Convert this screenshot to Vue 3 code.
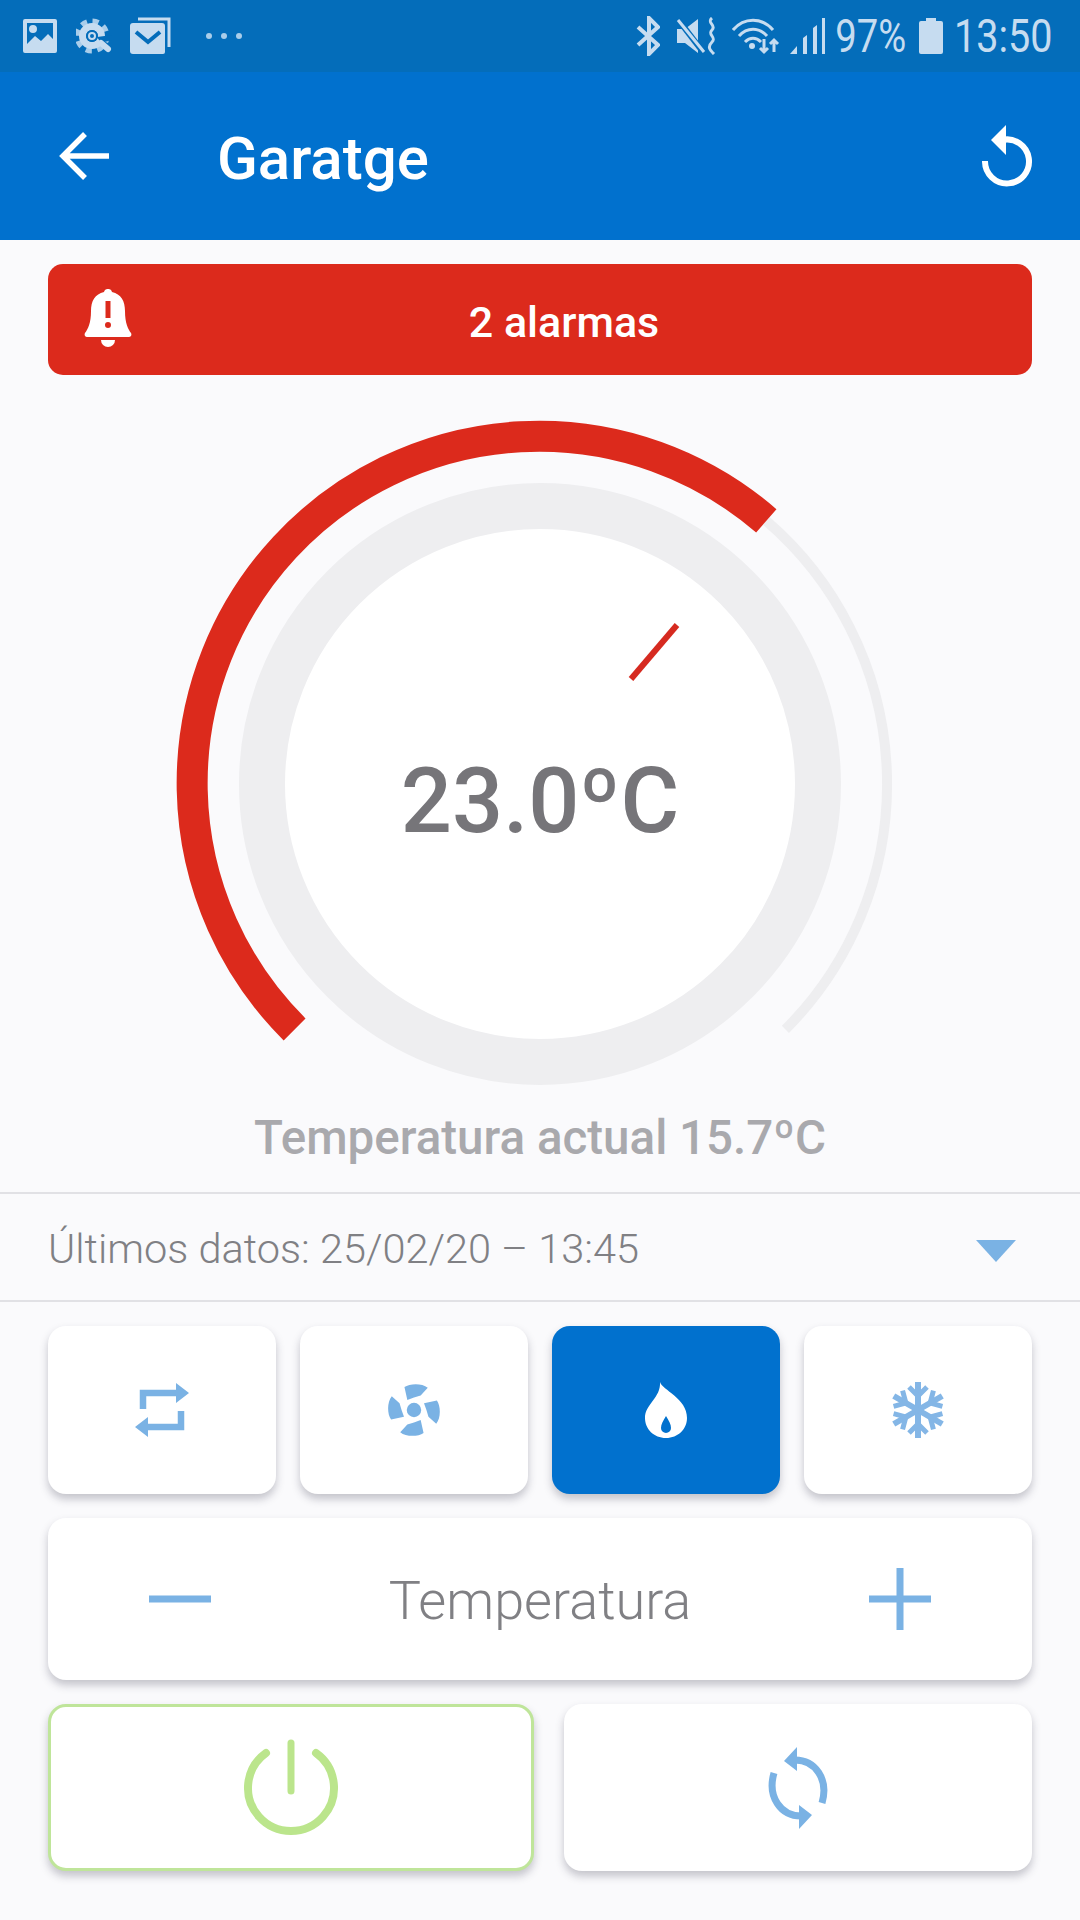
<template>
  <div class="screen">
    <div class="status-bar">
      <div class="status-left">
        <svg width="36" height="36" viewBox="0 0 36 36">
          <path fill="#c6dcf0" fill-rule="evenodd" d="M3 1h30a2 2 0 0 1 2 2v30a2 2 0 0 1-2 2H3a2 2 0 0 1-2-2V3a2 2 0 0 1 2-2zM5 5v21l8-8 6 5 7-7 5 5V5zM11 7a4 4 0 1 1 0 8 4 4 0 0 1 0-8z" />
        </svg>
        <svg width="36" height="36" viewBox="0 0 36 36">
          <circle cx="16" cy="18" r="14.500" fill="none" stroke="#a9cdea" stroke-width="6" stroke-dasharray="6 5.400" />
          <circle cx="16" cy="18" r="9.500" fill="none" stroke="#c6dcf0" stroke-width="7" />
          <circle cx="16" cy="18" r="6" fill="#046dba" />
          <circle cx="16" cy="18" r="3" fill="none" stroke="#c6dcf0" stroke-width="2" />
          <path d="M21 19l15-2v5l-11 3z" fill="#046dba" />
          <path stroke="#c6dcf0" stroke-width="6" stroke-linecap="round" d="M25 25l7 6" />
        </svg>
        <svg width="42" height="38" viewBox="0 0 42 38">
          <path fill="none" stroke="#c6dcf0" stroke-width="3" d="M8 2h31v28" />
          <path fill="#c6dcf0" d="M3 6h29a3 3 0 0 1 3 3v26a2 2 0 0 1-2 2H3a3 3 0 0 1-3-3V9a3 3 0 0 1 3-3z" />
          <path fill="none" stroke="#046dba" stroke-width="4" d="M6 15l12 10 12-10" />
        </svg>
        <div class="dots"><i></i><i></i><i></i></div>
      </div>
      <div class="status-right">
        <svg width="24" height="40" viewBox="0 0 24 40">
          <path fill="none" stroke="#c6dcf0" stroke-width="4" d="M2 11l20 18-9 9V2l9 9L2 29" />
        </svg>
        <svg class="st-vib" width="42" height="38" viewBox="0 0 42 38">
          <path fill="#c6dcf0" d="M1 12h8l13-10v34L9 26H1z" />
          <path stroke="#046dba" stroke-width="6" d="M1 1l26 34" />
          <path stroke="#c6dcf0" stroke-width="3" d="M2 3l26 32" />
          <path fill="none" stroke="#c6dcf0" stroke-width="3" d="M36 1c-6 5 5 7 0 12s5 7 0 12-2 8 2 12" />
        </svg>
        <svg class="st-wifi" width="50" height="38" viewBox="0 0 50 38">
          <g fill="none" stroke="#c6dcf0" stroke-width="3">
            <path d="M1 13c11-13 29-13 40 0" />
            <path d="M7 19c8-9 20-9 28 0" />
            <path d="M13 25c5-5 11-5 16 0" />
          </g>
          <circle cx="20" cy="29" r="3" fill="#c6dcf0" />
          <path fill="none" stroke="#c6dcf0" stroke-width="3" d="M32 22v13M28 31l4 4 4-4M42 35V23M38 27l4-4 4 4" />
        </svg>
        <svg width="36" height="38" viewBox="0 0 36 38">
          <path fill="#c6dcf0" d="M0 37l7-8v8zM13 37V21l4-3v19zM23 37V11l4-3v29zM32 37V1h3v36z" />
        </svg>
        <span class="st-text pct">97%</span>
        <svg width="24" height="36" viewBox="0 0 24 36">
          <path fill="#c6dcf0" d="M7 0h10v3h5a2 2 0 0 1 2 2v29a2 2 0 0 1-2 2H2a2 2 0 0 1-2-2V5a2 2 0 0 1 2-2h5z" />
        </svg>
        <span class="st-text clock">13:50</span>
      </div>
    </div>

    <header class="app-bar">
      <svg class="back" width="50" height="50" viewBox="0 0 50 50">
        <path fill="none" stroke="#fff" stroke-width="5.500" d="M50 25H4M26 3L4 25l22 22" />
      </svg>
      <h1 class="title">Garatge</h1>
      <svg class="reload" width="52" height="62" viewBox="0 0 52 62">
        <path fill="none" stroke="#fff" stroke-width="6" d="M20 15a22 22 0 1 1-17 21" />
        <path fill="#fff" d="M24 0v30L9 15z" />
      </svg>
    </header>

    <div class="alarm">
      <svg class="bell" width="48" height="62" viewBox="0 0 48 62">
        <path fill="#fff" fill-rule="evenodd" d="M24 0a4 4 0 0 1 4 3c9 2 13 9 13 19 0 12 3 18 6 22 1 2 0 4-2 4H3c-2 0-3-2-2-4 3-4 6-10 6-22C7 12 11 5 20 3a4 4 0 0 1 4-3zM21.500 12v17h5V12zM24 33a3 3 0 1 0 0 6 3 3 0 0 0 0-6z" />
        <path fill="#fff" d="M17 51h14a7 7 0 0 1-14 0z" />
      </svg>
      <span class="alarm-text">2 alarmas</span>
    </div>

    <div class="gauge">
      <svg class="gauge-svg" width="1080" height="690" viewBox="0 0 1080 690">
        <circle cx="540" cy="368" r="278" fill="#fff" stroke="#eeeef0" stroke-width="46" />
        <path :d="arc(40.7, 135)" fill="none" stroke="#eeeef0" stroke-width="10" />
        <path :d="arc(225, 400.7)" fill="none" stroke="#dc2a1c" stroke-width="31" />
        <path d="M677 209L631 263" stroke="#d62a20" stroke-width="6" />
      </svg>
      <div class="setpoint">23.0ºC</div>
    </div>
    <div class="current">Temperatura actual 15.7ºC</div>

    <div class="last-data">
      <span class="last-text">Últimos datos: 25/02/20 – 13:45</span>
      <svg class="caret" width="40" height="22" viewBox="0 0 40 22"><path fill="#7ab2e4" d="M0 0h40L20 22z" /></svg>
    </div>

    <div class="controls">
      <div class="modes">
        <div class="card mode">
          <svg width="54" height="54" viewBox="0 0 54 54">
            <path fill="none" stroke="#7ab2e4" stroke-width="6.500" d="M8 26V10h36M46 28v16H8" />
            <path fill="#7ab2e4" d="M41 0l13 10-13 10zM13 34L0 44l13 10z" />
          </svg>
        </div>
        <div class="card mode">
          <svg width="60" height="60" viewBox="0 0 54 54">
            <circle cx="27" cy="27" r="6.500" fill="#7ab2e4" />
            <g fill="#7ab2e4">
              <path v-for="a in [0, 90, 180, 270]" :key="a" :transform="`rotate(${a} 27 27)`" d="M18.400 6.400C23 3 34 2.500 39.400 7L33 14c-4 1-8 2.500-12 4z" />
            </g>
          </svg>
        </div>
        <div class="card mode active">
          <svg width="42" height="56" viewBox="0 0 42 56">
            <path fill="#fff" fill-rule="evenodd" d="M15 0c2 8 27 16 27 36 0 11-9 20-21 20S0 47 0 36C0 22 16 16 15 0zM21 34c-3 5-5 8-5 12a5 5 0 0 0 10 0c0-4-2-7-5-12z" />
          </svg>
        </div>
        <div class="card mode">
          <svg width="54" height="56" viewBox="0 0 54 56">
            <g fill="none" stroke="#84b6e6" stroke-width="5">
              <g v-for="a in [0, 60, 120]" :key="a" :transform="`rotate(${a} 27 28)`">
                <path stroke-width="6" d="M27 0v56" />
                <path d="M18 5l9 9 9-9M18 51l9-9 9 9" />
              </g>
            </g>
          </svg>
        </div>
      </div>

      <div class="card stepper">
        <svg width="62" height="62" viewBox="0 0 62 62"><path stroke="#7ab2e4" stroke-width="7" d="M0 31h62" /></svg>
        <span class="stepper-label">Temperatura</span>
        <svg width="62" height="62" viewBox="0 0 62 62"><path stroke="#7ab2e4" stroke-width="7" d="M0 31h62M31 0v62" /></svg>
      </div>

      <div class="actions">
        <div class="card action power">
          <svg width="98" height="98" viewBox="0 0 98 98">
            <path fill="none" stroke="#bbe58c" stroke-width="8" stroke-linecap="round" d="M24 14a43 43 0 1 0 50 0" />
            <path stroke="#bbe58c" stroke-width="7" stroke-linecap="round" d="M49 4v48" />
          </svg>
        </div>
        <div class="card action sync">
          <svg width="62" height="82" viewBox="0 0 62 82">
            <g fill="none" stroke="#7ab2e4" stroke-width="7">
              <path d="M28 13C48 13 62 32 55 56" />
              <path d="M34 69C14 69 0 50 7 26" />
            </g>
            <path fill="#7ab2e4" d="M30 0L17 14l13 10zM32 82l13-14-13-10z" />
          </svg>
        </div>
      </div>
    </div>
  </div>
</template>

<script setup>
const cx = 540
const cy = 368
const r = 347

// angles are clockwise from the top of the dial
const point = (deg) => {
  const rad = (deg * Math.PI) / 180
  return `${(cx + r * Math.sin(rad)).toFixed(1)} ${(cy - r * Math.cos(rad)).toFixed(1)}`
}

const arc = (from, to) => {
  const large = to - from > 180 ? 1 : 0
  return `M${point(from)}A${r} ${r} 0 ${large} 1 ${point(to)}`
}
</script>

<style>
html, body {
  background: #fafafc;
}
</style>

<style scoped>
.screen {
  width: 1080px;
  height: 1920px;
  overflow: hidden;
  background: #fafafc;
  font-family: Roboto, "Liberation Sans", sans-serif;
}

.status-bar {
  height: 72px;
  background: #046dba;
  display: flex;
  align-items: center;
  justify-content: space-between;
  padding: 0 22px;
  box-sizing: border-box;
}

.status-left,
.status-right {
  display: flex;
  align-items: center;
}

.status-left {
  gap: 18px;
}

.dots {
  display: flex;
  gap: 9px;
  margin-left: 16px;
}

.dots i {
  width: 6px;
  height: 6px;
  border-radius: 50%;
  background: #a9cdea;
}

.status-right {
  gap: 8px;
  color: #c6dcf0;
}

.st-vib {
  margin-left: 8px;
}

.st-wifi {
  margin-left: 6px;
}

.st-text {
  font-size: 46px;
  line-height: 72px;
  display: inline-block;
  white-space: nowrap;
}

.pct {
  transform: scaleX(0.83);
  margin: 0 -2px 0 -6px;
}

.clock {
  transform: scaleX(0.86);
  margin: 0 -3px 0 -5px;
}

.app-bar {
  height: 168px;
  background: #0171ce;
  display: flex;
  align-items: center;
  padding: 0 46px 0 59px;
}

.back {
  flex: none;
}

.title {
  margin: 4px 0 0 108px;
  flex: 1;
  color: #fff;
  font-size: 60px;
  font-weight: 500;
}

.alarm {
  margin: 24px 48px 0;
  height: 111px;
  background: #dc2a1c;
  border-radius: 15px;
  display: flex;
  align-items: center;
  padding: 0 36px;
  color: #fff;
}

.bell {
  flex: none;
}

.alarm-text {
  flex: 1;
  margin-top: 4px;
  text-align: center;
  font-size: 43px;
  font-weight: 500;
}

.gauge {
  position: relative;
  margin-top: 41px;
  height: 689px;
}

.gauge-svg {
  display: block;
}

.setpoint {
  position: absolute;
  left: 0;
  right: 0;
  top: 321px;
  text-align: center;
  font-size: 90px;
  line-height: 130px;
  font-weight: 500;
  color: #767579;
}

.current {
  margin-top: 7px;
  height: 80px;
  line-height: 52px;
  text-align: center;
  font-size: 47.500px;
  font-weight: 500;
  color: #a9a9ad;
}

.last-data {
  height: 106px;
  border-top: 2px solid #e1e1e5;
  border-bottom: 2px solid #e1e1e5;
  display: flex;
  align-items: center;
  justify-content: space-between;
  padding: 0 64px 0 48px;
  color: #808084;
}

.last-text {
  margin-top: 3px;
  font-size: 41.500px;
  font-weight: 300;
}

.caret {
  margin-top: 7px;
}

.controls {
  padding: 24px 48px 0;
  display: flex;
  flex-direction: column;
  gap: 24px;
}

.card {
  background: #fff;
  border-radius: 18px;
  box-shadow: 0 5px 8px rgba(40, 40, 60, 0.26);
  box-sizing: border-box;
  display: flex;
  align-items: center;
  justify-content: center;
}

.modes {
  display: grid;
  grid-template-columns: repeat(4, 228px);
  gap: 24px;
}

.mode {
  height: 168px;
}

.mode.active {
  background: #0171ce;
}

.stepper {
  height: 162px;
  justify-content: space-between;
  padding: 0 101px;
}

.stepper-label {
  margin-top: 3px;
  font-size: 54px;
  font-weight: 300;
  color: #808084;
}

.actions {
  display: flex;
  gap: 30px;
}

.action {
  height: 167px;
}

.power {
  width: 486px;
  border: 3px solid #bfe59a;
}

.sync {
  flex: 1;
}
</style>
